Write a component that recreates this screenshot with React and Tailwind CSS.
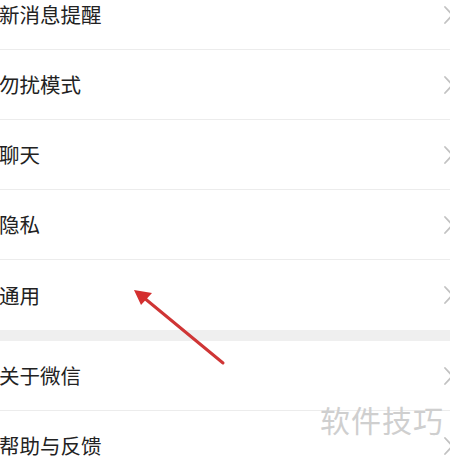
import React from 'react';

const Chevron = () => (
  <svg width="12" height="20" viewBox="0 0 12 20" className="-mr-[5px] shrink-0">
    <path d="M2 2 L9.5 10 L2 18" fill="none" stroke="#c2c2c2" strokeWidth="1.8" strokeLinecap="round" strokeLinejoin="round" />
  </svg>
);

const Row = ({ label, last }) => (
  <div className={`h-[70px] flex items-center justify-between bg-white ${last ? '' : 'border-b border-[#ececec]'}`}>
    <span className="-ml-[1px] text-[20.5px] text-[#222222]">{label}</span>
    <Chevron />
  </div>
);

export default function App() {
  const top = ['新消息提醒', '勿扰模式', '聊天', '隐私', '通用'];
  const bottom = ['关于微信', '帮助与反馈'];

  return (
    <div
      className="relative w-[450px] h-[457px] overflow-hidden bg-white"
      style={{ fontFamily: '"Noto Sans CJK SC", "Noto Sans", sans-serif' }}
    >
      <div className="-mt-[20px] flex flex-col">
        {top.map((t, i) => (
          <Row key={t} label={t} last={i === top.length - 1} />
        ))}
        <div className="h-[11px] bg-[#efefef]" />
        {bottom.map((t) => (
          <Row key={t} label={t} />
        ))}
      </div>

      {/* red arrow */}
      <svg className="absolute left-0 top-0" width="450" height="457" viewBox="0 0 450 457">
        <line x1="223" y1="363" x2="143" y2="297" stroke="#cf3535" strokeWidth="3" strokeLinecap="round" />
        <polygon points="134,290 152,293 141,305" fill="#d42f2f" />
      </svg>

      {/* watermark */}
      <div className="absolute left-[320px] top-[404px] text-[30px] leading-none text-[#cfcfcf] tracking-[1px]">
        软件技巧
      </div>
    </div>
  );
}
